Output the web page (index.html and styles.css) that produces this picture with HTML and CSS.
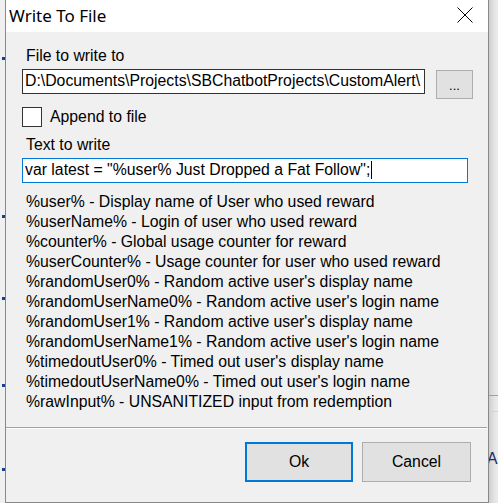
FILE: index.html
```html
<!DOCTYPE html>
<html>
<head>
<meta charset="utf-8">
<link rel="stylesheet" href="styles.css">
</head>
<body>
<div class="desktop">
  <div class="bg-shadow"></div>
  <div class="bg-line bg-line-a"></div>
  <div class="bg-line bg-line-b"></div>
  <div class="bg-clip"><span class="bg-text">Ale</span></div>
  <span class="bg-mark m1"></span>
  <span class="bg-mark m2"></span>
  <span class="bg-mark m3"></span>
  <span class="bg-mark m4"></span>
  <span class="bg-mark m5"></span>

  <div class="dialog">
    <div class="titlebar">
      <span class="title">Write To File</span>
      <svg class="close" width="16" height="16" viewBox="0 0 16 16">
        <path d="M0.5 0.5 L15.5 15.5 M15.5 0.5 L0.5 15.5" stroke="#000" stroke-width="1" fill="none"/>
      </svg>
    </div>
    <div class="content">
      <div class="label">File to write to</div>
      <div class="file-row">
        <div class="field field-dark">D:\Documents\Projects\SBChatbotProjects\CustomAlert\</div>
        <div class="btn btn-browse">...</div>
      </div>
      <div class="check-row">
        <span class="checkbox"></span>
        <span class="check-label">Append to file</span>
      </div>
      <div class="label label-2">Text to write</div>
      <div class="field field-focus">var latest = "%user% Just Dropped a Fat Follow";<span class="caret"></span></div>
      <ul class="vars">
        <li>%user% - Display name of User who used reward</li>
        <li>%userName% - Login of user who used reward</li>
        <li>%counter% - Global usage counter for reward</li>
        <li>%userCounter% - Usage counter for user who used reward</li>
        <li>%randomUser0% - Random active user's display name</li>
        <li>%randomUserName0% - Random active user's login name</li>
        <li>%randomUser1% - Random active user's display name</li>
        <li>%randomUserName1% - Random active user's login name</li>
        <li>%timedoutUser0% - Timed out user's display name</li>
        <li>%timedoutUserName0% - Timed out user's login name</li>
        <li>%rawInput% - UNSANITIZED input from redemption</li>
      </ul>
      <div class="separator"></div>
      <div class="actions">
        <div class="btn btn-ok">Ok</div>
        <div class="btn btn-cancel">Cancel</div>
      </div>
    </div>
  </div>
</div>
</body>
</html>
```
FILE: styles.css
```css
html, body {
  margin: 0;
  padding: 0;
}
body {
  width: 498px;
  height: 503px;
  overflow: hidden;
  background: #f0f0f0;
  font-family: "Liberation Sans", Arial, sans-serif;
  color: #000;
}
.desktop {
  position: relative;
  width: 498px;
  height: 503px;
  overflow: hidden;
}
.bg-shadow {
  position: absolute;
  left: 489px;
  top: 0;
  width: 9px;
  height: 503px;
  background: linear-gradient(to right, #cfcfcf, #e4e4e4 60%, #ececec);
}
.bg-line {
  position: absolute;
  left: 489px;
  width: 9px;
  height: 1px;
}
.bg-line-a { top: 395px; background: #a0a0a0; }
.bg-line-b { top: 411px; background: #d4d4d4; }
.bg-clip {
  position: absolute;
  left: 487px;
  top: 450px;
  width: 11px;
  height: 18px;
  overflow: hidden;
}
.bg-text {
  display: block;
  font-size: 15.8px;
  line-height: 18px;
  white-space: nowrap;
  color: #1a2a6a;
}
.bg-mark {
  position: absolute;
  left: 2px;
  width: 3px;
  height: 3px;
  background: #1e3c8c;
}
.m1 { top: 57px; }
.m2 { top: 215px; }
.m3 { top: 297px; }
.m4 { top: 384px; }
.m5 { top: 468px; }

.dialog {
  position: absolute;
  left: 5px;
  top: 0;
  width: 482px;
  height: 502px;
  border: 1px solid #888888;
  border-top: none;
  background: #f0f0f0;
  display: flex;
  flex-direction: column;
}
.titlebar {
  height: 32px;
  background: #fff;
  display: flex;
  align-items: center;
  justify-content: space-between;
  padding-left: 3px;
  padding-right: 15px;
}
.title {
  font-family: "Noto Sans", "Open Sans", sans-serif;
  font-size: 17px;
  line-height: 22px;
  margin-top: -1px;
}
.close {
  display: block;
  margin-top: -2px;
}
.content {
  padding: 15px 0 0 16px;
  display: flex;
  flex-direction: column;
  font-size: 15.8px;
  line-height: 18px;
}
.label {
  margin-left: 4px;
  height: 18px;
}
.label-2 {
  margin-top: 9px;
}
.file-row {
  margin-top: 4px;
  display: flex;
  align-items: flex-start;
  gap: 11px;
  height: 30px;
}
.field {
  box-sizing: border-box;
  height: 25px;
  background: #fff;
  padding: 2px 0 0 2px;
  white-space: nowrap;
  overflow: hidden;
}
.field-dark {
  width: 403px;
  border: 1px solid #333;
}
.field-focus {
  margin-top: 4px;
  width: 446px;
  border: 1px solid #0078d7;
}
.caret {
  display: inline-block;
  width: 1px;
  height: 18px;
  background: #000;
  vertical-align: top;
  margin-left: 1px;
}
.btn {
  box-sizing: border-box;
  background: #e1e1e1;
  border: 1px solid #adadad;
  display: flex;
  align-items: center;
  justify-content: center;
}
.btn-browse {
  margin-top: 1px;
  width: 37px;
  height: 29px;
  font-size: 13px;
  padding-top: 2px;
}
.check-row {
  margin-top: 8px;
  display: flex;
  align-items: center;
  gap: 8px;
  height: 20px;
}
.checkbox {
  box-sizing: border-box;
  width: 20px;
  height: 20px;
  border: 1px solid #333;
  background: #fff;
}
.vars {
  list-style: none;
  margin: 9px 0 0 4px;
  padding: 0;
  line-height: 20px;
}
.separator {
  margin: 15px 1px 0 -16px;
  border-top: 1px solid #a0a0a0;
  border-bottom: 1px solid #fff;
  height: 0;
}
.actions {
  margin-top: 13px;
  display: flex;
  justify-content: flex-end;
  gap: 9px;
  padding-right: 17px;
}
.btn-ok,
.btn-cancel {
  height: 40px;
  font-size: 15.8px;
}
.btn-ok {
  width: 108px;
  border: 2px solid #0078d7;
}
.btn-cancel {
  width: 109px;
}
```
